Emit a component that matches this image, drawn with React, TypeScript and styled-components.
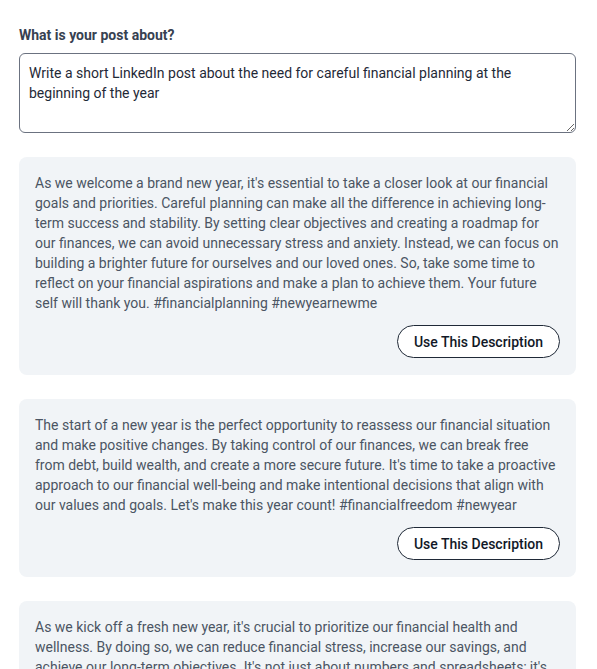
import React from 'react';
import styled, {createGlobalStyle} from 'styled-components';

const GlobalStyle = createGlobalStyle`
  html, body {
    margin: 0;
    padding: 0;
    background: #ffffff;
    font-family: Roboto, "Liberation Sans", Arial, sans-serif;
  }
`;

const Page = styled.main`
  display: flex;
  flex-direction: column;
  padding: 25px 21px 0 19px;
`;

const Label = styled.label`
  font-size: 14px;
  line-height: 20px;
  font-weight: 700;
  color: #374151;
  margin-bottom: 8px;
`;

const Prompt = styled.textarea`
  box-sizing: border-box;
  width: 100%;
  height: 80px;
  padding: 9px 9px;
  border: 1px solid #6b7280;
  border-radius: 6px;
  font-family: inherit;
  font-size: 14px;
  line-height: 20px;
  color: #1f2937;
  resize: vertical;
  outline: none;
`;

const List = styled.div`
  display: flex;
  flex-direction: column;
  gap: 24px;
  margin-top: 24px;
`;

const Card = styled.section`
  display: flex;
  flex-direction: column;
  background: #f1f4f7;
  border-radius: 8px;
  padding: 16px 16px 17px 16px;
`;

const CardText = styled.p`
  margin: 0;
  font-size: 14px;
  line-height: 20px;
  color: #4b5563;
`;

const Actions = styled.div`
  display: flex;
  justify-content: flex-end;
  margin-top: 12px;
`;

const UseButton = styled.button`
  height: 33px;
  padding: 0 16px;
  background: #ffffff;
  border: 1px solid #1f2937;
  border-radius: 999px;
  font-family: inherit;
  font-size: 14px;
  font-weight: 500;
  color: #111827;
  cursor: pointer;
`;

const DESCRIPTIONS = [
  "As we welcome a brand new year, it's essential to take a closer look at our financial goals and priorities. Careful planning can make all the difference in achieving long-term success and stability. By setting clear objectives and creating a roadmap for our finances, we can avoid unnecessary stress and anxiety. Instead, we can focus on building a brighter future for ourselves and our loved ones. So, take some time to reflect on your financial aspirations and make a plan to achieve them. Your future self will thank you. #financialplanning #newyearnewme",
  "The start of a new year is the perfect opportunity to reassess our financial situation and make positive changes. By taking control of our finances, we can break free from debt, build wealth, and create a more secure future. It's time to take a proactive approach to our financial well-being and make intentional decisions that align with our values and goals. Let's make this year count! #financialfreedom #newyear",
  "As we kick off a fresh new year, it's crucial to prioritize our financial health and wellness. By doing so, we can reduce financial stress, increase our savings, and achieve our long-term objectives. It's not just about numbers and spreadsheets; it's about creating a life we love and feel secure in. Let's commit to making smart money moves this year. #moneymatters #newyeargoals"
];

const App = () => {
  return (
    <Page>
      <GlobalStyle />
      <Label htmlFor="post-topic">What is your post about?</Label>
      <Prompt
        id="post-topic"
        defaultValue="Write a short LinkedIn post about the need for careful financial planning at the beginning of the year"
      />
      <List>
        {DESCRIPTIONS.map((text) => (
          <Card key={text.slice(0, 24)}>
            <CardText>{text}</CardText>
            <Actions>
              <UseButton type="button">Use This Description</UseButton>
            </Actions>
          </Card>
        ))}
      </List>
    </Page>
  );
};

export default App;
